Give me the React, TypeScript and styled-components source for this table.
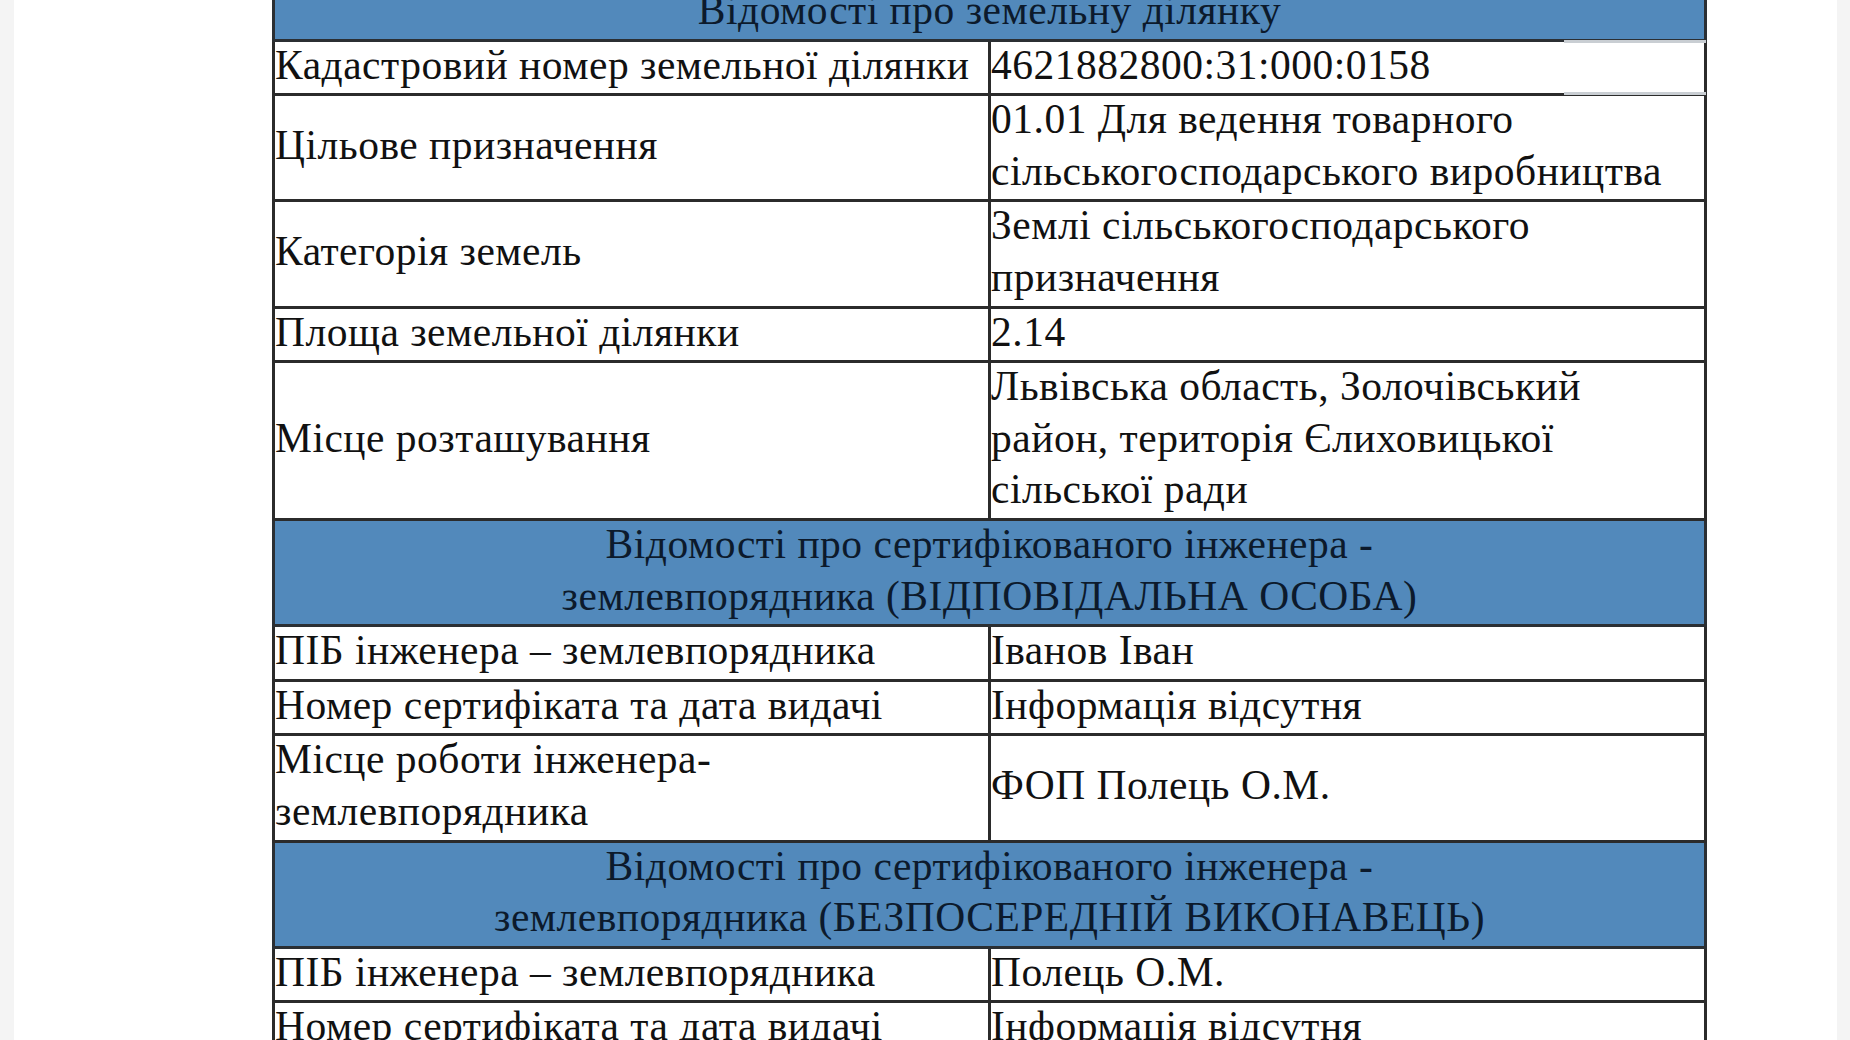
import React from 'react';
import styled, { createGlobalStyle } from 'styled-components';

type Row =
  | { kind: 'head'; lines: string[] }
  | { kind: 'data'; label: string[]; value: string[]; faded?: boolean };

const rows: Row[] = [
  { kind: 'head', lines: ['Відомості про земельну ділянку'] },
  {
    kind: 'data',
    label: ['Кадастровий номер земельної ділянки'],
    value: ['4621882800:31:000:0158'],
    faded: true,
  },
  {
    kind: 'data',
    label: ['Цільове призначення'],
    value: ['01.01 Для ведення товарного', 'сільськогосподарського виробництва'],
  },
  {
    kind: 'data',
    label: ['Категорія земель'],
    value: ['Землі сільськогосподарського', 'призначення'],
  },
  { kind: 'data', label: ['Площа земельної ділянки'], value: ['2.14'] },
  {
    kind: 'data',
    label: ['Місце розташування'],
    value: ['Львівська область, Золочівський', 'район, територія Єлиховицької', 'сільської ради'],
  },
  {
    kind: 'head',
    lines: ['Відомості про сертифікованого інженера -', 'землевпорядника (ВІДПОВІДАЛЬНА ОСОБА)'],
  },
  { kind: 'data', label: ['ПІБ інженера – землевпорядника'], value: ['Іванов Іван'] },
  { kind: 'data', label: ['Номер сертифіката та дата видачі'], value: ['Інформація відсутня'] },
  {
    kind: 'data',
    label: ['Місце роботи інженера-', 'землевпорядника'],
    value: ['ФОП Полець О.М.'],
  },
  {
    kind: 'head',
    lines: ['Відомості про сертифікованого інженера -', 'землевпорядника (БЕЗПОСЕРЕДНІЙ ВИКОНАВЕЦЬ)'],
  },
  { kind: 'data', label: ['ПІБ інженера – землевпорядника'], value: ['Полець О.М.'] },
  { kind: 'data', label: ['Номер сертифіката та дата видачі'], value: ['Інформація відсутня'] },
];

const Lines = ({ lines }: { lines: string[] }) => (
  <Text>
    {lines.map((line, i) => (
      <React.Fragment key={i}>
        {i > 0 && <br />}
        {line}
      </React.Fragment>
    ))}
  </Text>
);

const App = () => {
  return (
    <>
      <GlobalStyle />
      <Page>
        <Sheet>
          <Table>
            <colgroup>
              <col style={{ width: '50%' }} />
              <col style={{ width: '50%' }} />
            </colgroup>
            <tbody>
              {rows.map((row, i) =>
                row.kind === 'head' ? (
                  <tr key={i}>
                    <HeadCell colSpan={2}>
                      <Lines lines={row.lines} />
                    </HeadCell>
                  </tr>
                ) : (
                  <tr key={i}>
                    <Cell>
                      <Lines lines={row.label} />
                    </Cell>
                    <Cell $faded={row.faded}>
                      <Lines lines={row.value} />
                    </Cell>
                  </tr>
                )
              )}
            </tbody>
          </Table>
        </Sheet>
      </Page>
    </>
  );
};

export default App;

const GlobalStyle = createGlobalStyle`
  html, body {
    margin: 0;
    padding: 0;
    height: 100%;
    overflow: hidden;
    background: #f4f4f4;
  }
`;

const Page = styled.div`
  display: flex;
  height: 1040px;
  padding: 0 13px 0 14px;
  background: #f4f4f4;
`;

const Sheet = styled.div`
  flex: 1;
  background: #fff;
  padding: 0 130px 0 258px;
  overflow: hidden;
`;

const Table = styled.table`
  width: 1435px;
  margin-top: -16px;
  border-collapse: collapse;
  table-layout: fixed;
  font-family: 'Liberation Serif', 'Times New Roman', serif;
  font-size: 41.5px;
  letter-spacing: 0.5px;
  line-height: 51.6px;
  color: #111;
`;

const Text = styled.span`
  position: relative;
  top: -2px;
`;

const HeadCell = styled.th`
  border: 3px solid #2b2f33;
  background: #5289bb;
  color: #0c1a2c;
  font-weight: normal;
  text-align: center;
  padding: 0;
  white-space: nowrap;
`;

const Cell = styled.td<{ $faded?: boolean }>`
  position: relative;
  border: 3px solid #2b2b2b;
  padding: 0;
  vertical-align: middle;
  text-align: left;
  white-space: nowrap;

  ${({ $faded }) =>
    $faded &&
    `
    &::before, &::after {
      content: '';
      position: absolute;
      right: -2px;
      width: 142px;
      height: 3px;
      background: #c9ced3;
    }
    &::before { top: -2px; }
    &::after { bottom: -2px; }
  `}
`;
